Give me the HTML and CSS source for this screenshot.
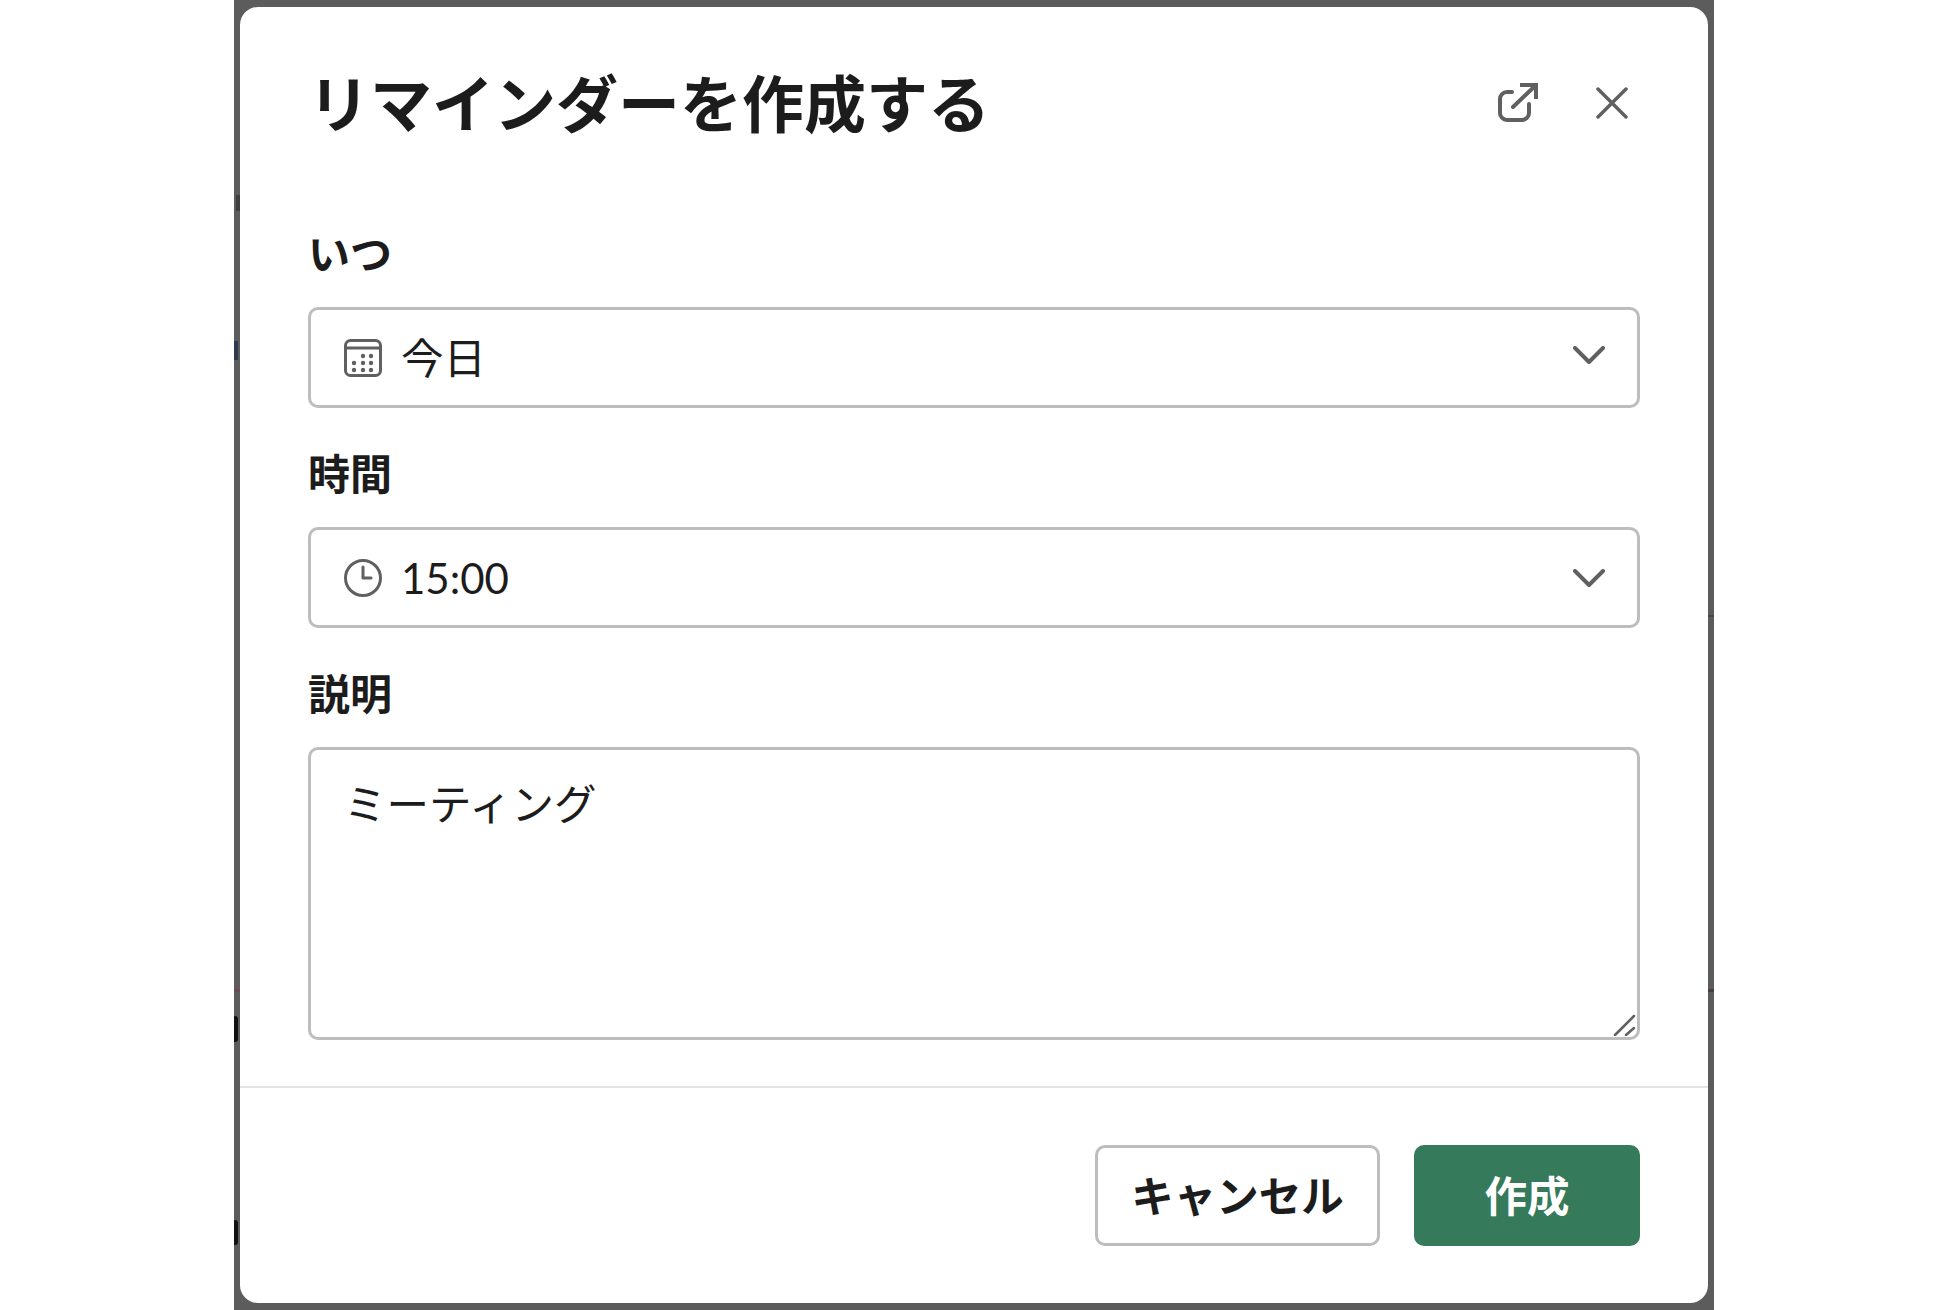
FILE: index.html
```html
<!DOCTYPE html>
<html lang="ja">
<head>
<meta charset="utf-8">
<title>リマインダーを作成する</title>
<link rel="stylesheet" href="styles.css">
</head>
<body>
<div class="backdrop">
  <span class="mark mark-l1"></span>
  <span class="mark mark-l2"></span>
  <span class="mark mark-l3"></span>
  <span class="mark mark-l4"></span>
  <span class="mark mark-l5"></span>
  <span class="mark mark-r1"></span>
  <span class="mark mark-r2"></span>
  <section class="modal">
    <header class="modal-head">
      <h1 class="modal-title">リマインダーを作成する</h1>
      <div class="head-icons">
        <svg class="icon-open" viewBox="0 0 40 39" fill="none" stroke="#616061" stroke-width="4" stroke-linecap="round" stroke-linejoin="round"><path d="M14 9H9a7 7 0 0 0-7 7v14a7 7 0 0 0 7 7h15a7 7 0 0 0 7-7v-9"/><path d="M15 24 37 3"/><path d="M22 2h16v14" stroke-linecap="butt" stroke-linejoin="miter"/></svg>
        <svg class="icon-close" viewBox="0 0 32 32" fill="none" stroke="#616061" stroke-width="3.500" stroke-linecap="round"><path d="M2 2l28 28M30 2 2 30"/></svg>
      </div>
    </header>
    <div class="modal-body">
      <label class="field-label">いつ</label>
      <div class="select">
        <svg class="field-icon" viewBox="0 0 40 40" fill="none" stroke="#616061" stroke-width="3"><rect x="2.500" y="2.500" width="35" height="35" rx="5"/><path d="M2.500 10h35"/><g fill="#616061" stroke="none"><circle cx="20" cy="18" r="2.200"/><circle cx="28" cy="18" r="2.200"/><circle cx="11" cy="25" r="2.200"/><circle cx="20" cy="25" r="2.200"/><circle cx="28" cy="25" r="2.200"/><circle cx="11" cy="32" r="2.200"/><circle cx="20" cy="32" r="2.200"/><circle cx="28" cy="32" r="2.200"/></g></svg>
        <span class="value value-raised">今日</span>
        <svg class="chevron chevron-raised" viewBox="0 0 32 18" fill="none" stroke="#616061" stroke-width="4" stroke-linecap="round" stroke-linejoin="round"><path d="M2 2l14 14L30 2"/></svg>
      </div>
      <label class="field-label">時間</label>
      <div class="select">
        <svg class="field-icon" viewBox="0 0 40 40" fill="none" stroke="#616061" stroke-width="3" stroke-linecap="round" stroke-linejoin="round"><circle cx="20" cy="20" r="17.500"/><path d="M20 9v11h8"/></svg>
        <span class="value value-latin">15:00</span>
        <svg class="chevron" viewBox="0 0 32 18" fill="none" stroke="#616061" stroke-width="4" stroke-linecap="round" stroke-linejoin="round"><path d="M2 2l14 14L30 2"/></svg>
      </div>
      <label class="field-label">説明</label>
      <div class="textarea">
        <span class="value">ミーティング</span>
        <svg class="grip" viewBox="0 0 24 24" fill="none" stroke="#616061" stroke-width="2.500" stroke-linecap="round"><path d="M3 23 22 4M14 23l8-7"/></svg>
      </div>
    </div>
    <footer class="modal-foot">
      <button class="btn btn-cancel" type="button">キャンセル</button>
      <button class="btn btn-create" type="button">作成</button>
    </footer>
  </section>
</div>
</body>
</html>
```
FILE: styles.css
```css
* { box-sizing: border-box; }
html, body { margin: 0; padding: 0; height: 100%; background: #fff; }
body {
  display: flex;
  justify-content: center;
  font-family: "Lato", "Noto Sans CJK JP", sans-serif;
  color: #1d1c1d;
  overflow: hidden;
}
.backdrop {
  position: relative;
  width: 1480px;
  height: 1310px;
  background: #5c5c5c;
  padding: 7px 6px;
}
.mark { position: absolute; width: 4px; background: #111; }
.mark-l1 { left: 2px; top: 195px; height: 16px; background: #404040; }
.mark-l2 { left: 0; top: 341px; height: 19px; background: #2c3a52; }
.mark-l3 { left: 0; top: 989px; width: 6px; height: 3px; background: #6d4a56; }
.mark-l4 { left: 0; top: 1016px; height: 26px; border-radius: 0 3px 3px 0; }
.mark-l5 { left: 0; top: 1220px; height: 25px; border-radius: 0 3px 3px 0; }
.mark-r1 { right: 0; top: 615px; width: 6px; height: 2px; background: #484848; }
.mark-r2 { right: 0; top: 989px; width: 6px; height: 3px; background: #4a3c40; }
.modal {
  height: 1296px;
  background: #fff;
  border-radius: 18px;
  display: flex;
  flex-direction: column;
}
.modal-head {
  height: 190px;
  padding: 0 80px 0 68px;
  display: flex;
  align-items: flex-start;
  justify-content: space-between;
}
.modal-title {
  margin: 54px 0 0;
  font-family: "Noto Sans CJK JP", sans-serif;
  font-size: 62px;
  line-height: 80px;
  font-weight: 700;
}
.head-icons { display: flex; align-items: center; gap: 58px; margin-top: 76px; }
.icon-open { width: 40px; height: 39px; display: block; }
.icon-close { width: 32px; height: 32px; display: block; }
.modal-body { flex: 1; padding: 30px 68px 0; display: flex; flex-direction: column; }
.field-label {
  font-family: "Noto Sans CJK JP", sans-serif;
  font-size: 42px;
  line-height: 50px;
  font-weight: 700;
  height: 80px;
  display: block;
}
.select {
  height: 101px;
  border: 3px solid #bdbdbd;
  border-radius: 10px;
  display: flex;
  align-items: center;
  padding: 0 32px;
  margin-bottom: 39px;
}
.field-icon { width: 40px; height: 40px; flex: none; margin-right: 18px; }
.value { font-family: "Noto Sans CJK JP", sans-serif; font-size: 42.500px; line-height: 56px; }
.value-raised { margin-bottom: 4px; }
.value-latin { font-family: "Lato", sans-serif; font-size: 42px; }
.chevron { width: 32px; height: 18px; margin-left: auto; }
.chevron-raised { margin-bottom: 5px; }
.textarea {
  position: relative;
  height: 293px;
  border: 3px solid #bdbdbd;
  border-radius: 10px;
  padding: 24px 33px;
}
.grip { position: absolute; right: 1px; bottom: 1px; width: 24px; height: 24px; }
.modal-foot {
  height: 217px;
  border-top: 2px solid #e4e4e4;
  padding: 57px 68px 0;
  display: flex;
  justify-content: flex-end;
  align-items: flex-start;
  gap: 34px;
}
.btn {
  height: 101px;
  border-radius: 10px;
  font-family: "Noto Sans CJK JP", sans-serif;
  font-size: 42.500px;
  font-weight: 700;
  padding: 0 0 4px;
}
.btn-cancel { width: 285px; background: #fff; border: 3px solid #bdbdbd; color: #1d1c1d; }
.btn-create { width: 226px; background: #357a5b; border: 0; color: #fff; }
```
